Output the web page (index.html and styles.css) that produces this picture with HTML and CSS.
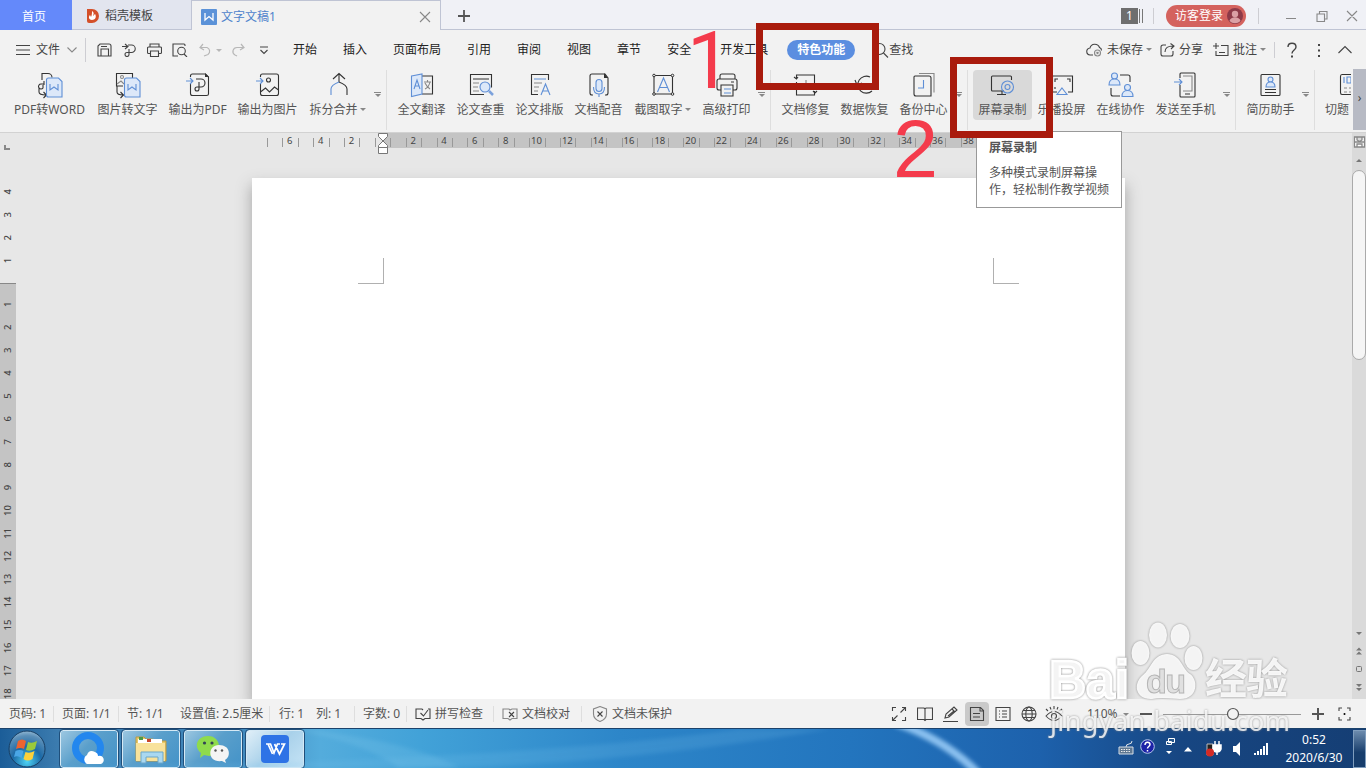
FILE: index.html
```
<!DOCTYPE html>
<html lang="zh-CN">
<head>
  <meta charset="UTF-8" />
  <meta name="viewport" content="width=device-width, initial-scale=1.0" />
  <title>文字文稿1</title>
  <link rel="stylesheet" href="styles.css">
</head>
<body>
  <header class="tabbar">
    <div class="tab home">首页</div>
    <div class="tab docer">
      <svg width="14" height="16" viewBox="0 0 14 16"><path d="M1 1h5a7 7 0 0 1 0 14H3a2 2 0 0 1-2-2z" fill="#d4502a"/><path d="M6 3c3 2 1 4 1 5l2-2c2 3 0 6-3 6s-4-3-2-5l1 2c1-2 1-4 1-6z" fill="#fff"/></svg>
      <span>稻壳模板</span>
    </div>
    <div class="tab active">
      <svg width="16" height="16" viewBox="0 0 16 16"><rect width="16" height="16" rx="1" fill="#5b92d8"/><path d="M4 4v7l4-3.500 4 3.500V4" fill="none" stroke="#fff" stroke-width="1.300"/></svg>
      <span>文字文稿1</span>
      <svg class="close" width="12" height="12" viewBox="0 0 12 12"><path d="M1 1l10 10M11 1L1 11" class="g"/></svg>
    </div>
    <svg class="plus" width="14" height="14" viewBox="0 0 14 14"><path d="M7 1v12M1 7h12" stroke="#555" stroke-width="1.800"/></svg>
    <div class="window">
      <span class="badge">1</span>
      <span class="bars"></span>
      <span class="vline v1"></span>
      <div class="login">访客登录
        <svg width="16" height="16" viewBox="0 0 16 16"><circle cx="8" cy="8" r="8" fill="#8d3a48"/><circle cx="8" cy="6" r="3.200" fill="#dba0a5"/><path d="M2.500 13c1-5 10-5 11 0a8 8 0 0 1-11 0z" fill="#dba0a5"/></svg>
      </div>
      <span class="vline v2"></span>
      <svg class="winbtns" width="72" height="14" viewBox="0 0 72 14"><g class="g"><path d="M0 9.500h10M31 5h7.500v7.500H31zM33.500 5V2.500h7.500V10h-2.500M61 2l10 10M71 2L61 12"/></g></svg>
    </div>
  </header>

  <nav class="menubar">
    <svg class="burger" width="14" height="12" viewBox="0 0 14 12"><path class="k" d="M0 1.500h14M0 6h14M0 10.500h14"/></svg>
    <span class="file">文件</span>
    <svg class="chev" width="10" height="6" viewBox="0 0 10 6"><path class="g" d="M.500.500L5 5 9.500.500"/></svg>
    <span class="vline v3"></span>
    <div class="quick">
      <svg width="15" height="14" viewBox="0 0 15 14"><path class="k" d="M1 13V3l2-2h9a2 2 0 0 1 2 2v10zM4 13V6h7.500v7M4 3.500h6"/></svg>
      <svg width="15" height="14" viewBox="0 0 15 14"><path class="k" d="M6 2h3.500a3.700 3.700 0 0 1 0 7.500H5a2 2 0 1 0 2 2V6M0 3.500h5.500M3 1l3 2.500L3 6"/></svg>
      <svg width="15" height="14" viewBox="0 0 15 14"><path class="k" d="M3 4V1h9v3M3.500 10.500H1.500a1 1 0 0 1-1-1V5a1 1 0 0 1 1-1h12a1 1 0 0 1 1 1v4.500a1 1 0 0 1-1 1h-2M3.500 8h8v5.500h-8z"/></svg>
      <svg width="16" height="14" viewBox="0 0 16 14"><path class="k" d="M6 13H1V1h11a1 1 0 0 1 1 1v1M12 11l3 3"/><circle class="k" cx="9.500" cy="8" r="3.800"/></svg>
    </div>
    <svg class="undo" width="66" height="14" viewBox="0 0 66 14"><path d="M4 1L1 4.500 5 7M1 4.500h7a4 4 0 0 1 1 7l-4 1.500M42 1l3 3.500L41 7M45 4.500h-7a4 4 0 0 0-2 7.500l2 1" fill="none" stroke="#b7b7b7" stroke-width="1.200"/><path d="M17 6h6l-3 3z" fill="#b7b7b7"/><path class="k" d="M61 4h8M61.500 7l3.500 3.500L68.500 7"/></svg>
    <ul class="menu">
      <li>开始</li>
      <li>插入</li>
      <li>页面布局</li>
      <li>引用</li>
      <li>审阅</li>
      <li>视图</li>
      <li>章节</li>
      <li>安全</li>
      <li class="dev">开发工具</li>
      <li class="current">特色功能</li>
    </ul>
    <div class="find">
      <svg width="16" height="16" viewBox="0 0 16 16"><circle class="k" cx="6.500" cy="7" r="5.500"/><path class="k" d="M10.500 11l4.500 4.500"/></svg>
      <span>查找</span>
    </div>
    <div class="actions">
      <svg width="17" height="14" viewBox="0 0 17 14"><path class="k" d="M7 12H4.500a3.500 3.500 0 0 1-.5-7c1-5 8-5 9.500-.5a3 3 0 0 1 2 3"/><circle class="g" cx="11.500" cy="10" r="3"/><path class="g" d="M10.500 9l2 2m0-2l-2 2"/></svg>
      <span class="save">未保存</span><i class="arrow"></i>
      <svg class="share" width="15" height="14" viewBox="0 0 15 14"><path class="k" d="M6 2H3a2 2 0 0 0-2 2v7a2 2 0 0 0 2 2h8a2 2 0 0 0 2-2V8M5 9c0-4 3-6 8-6M10.500.500L14 3l-3 3"/></svg>
      <span>分享</span>
      <svg class="note" width="16" height="14" viewBox="0 0 16 14"><path class="k" d="M3 0v6M0 3h6M8 2.500h7v10H3V8M6 9.500h6"/></svg>
      <span>批注</span><i class="arrow"></i>
      <span class="vline v4"></span>
      <svg width="64" height="16" viewBox="0 0 64 16"><path d="M1 5c0-5 8-5 8 0 0 3-4 3-4 6.500" fill="none" stroke="#444" stroke-width="1.400"/><path d="M4 13.500h2v2H4zM31 2h2v2h-2zM31 7.500h2v2h-2zM31 13h2v2h-2z" fill="#444"/><path class="k" d="M51.500 11L58 4.500l6.500 6.500"/></svg>
    </div>
  </nav>

  <section class="ribbon">
    <div class="tool pdfword"><svg viewBox="0 0 28 28"><path class="k" d="M6 9V2.500h6a4 4 0 0 1 4 4M8 10v4M8 13H5a2.500 2.500 0 1 0 2 4v-3M3 17v4q0 3 7 3M7.500 21l3 3-3 3"/><path class="bf" d="M10.500 9q0-2 2-2h10l3.500 3.500V26H12.500q-2 0-2-2z"/><path class="b" d="M14 13v6l4-3 4 3v-6"/></svg><span>PDF转WORD</span></div>
    <div class="tool w5"><svg viewBox="0 0 28 28"><path class="k" d="M9 15H2.500v-12.500h16V7M3 15v6q0 3 6 3M6.500 21l3 3-3 3"/><path class="g" d="M3 13l4-3 3 3"/><circle class="g" cx="8" cy="6" r="1.500"/><path class="bf" d="M10.500 9q0-2 2-2h10l3.500 3.500V26H12.500q-2 0-2-2z"/><path class="b" d="M14 13v6l4-3 4 3v-6"/></svg><span>图片转文字</span></div>
    <div class="tool outpdf"><svg viewBox="0 0 28 28"><path class="k" d="M6.500 6V5q0-2 2-2h13l3 3v17q0 1.500-2 1.500H8.500q-2 0-2-2V13M12 8h5a4 4 0 0 1 0 8h-4a2 2 0 1 0 2 2V11"/><path d="M21 2l4 4h-4z" fill="#333"/><path class="b" d="M2 10h7M6 7l3 3-3 3"/></svg><span>输出为PDF</span></div>
    <div class="tool w5"><svg viewBox="0 0 28 28"><path class="k" d="M6.500 6V5q0-2 2-2h14q2 0 2 2v17.500q0 2-2 2h-14q-2 0-2-2V13M6.500 21l5-4 4 4 5-5 4 3"/><circle class="k" cx="14.500" cy="9" r="2"/><path class="b" d="M2 10h7M6 7l3 3-3 3"/></svg><span>输出为图片</span></div>
    <div class="tool wa"><svg viewBox="0 0 28 28"><path class="k" d="M15 3v8M9 8l6-5.500L21 8M15 11q8 3 8 7v6"/><path class="b" d="M15 11q-8 3-8 7v6"/></svg><span>拆分合并<i class="arrow"></i></span></div>
    <i class="more"></i><span class="split"></span>
    <div class="tool"><svg viewBox="0 0 28 28"><path class="k" d="M14 5h10.500v18H14"/><path class="bf" d="M3.500 5L14 3v20L3.500 25.500z"/><path class="b" d="M6 18l3-9 3 9M7 15h4"/><path class="g" d="M16 11h7M19.500 9v2M17 18q4-2 5-7M17 12q2 4 5 6"/></svg><span>全文翻译</span></div>
    <div class="tool"><svg viewBox="0 0 28 28"><path class="k" d="M17 23.500H3.500V3.500h21v13M6 8h16"/><path class="g" d="M6 12h6M6 16h5M6 20h6"/><circle class="bf" cx="18" cy="16" r="5"/><path d="M22 20l4 4" stroke="#7ca2dc" stroke-width="2.500"/></svg><span>论文查重</span></div>
    <div class="tool"><svg viewBox="0 0 28 28"><path class="k" d="M12 23.500H5.500V3.500h17V9"/><path class="b" d="M8 8h12M15 24l4.500-11L24 24M16.500 20h6"/><path class="g" d="M8 12h8M8 16h5M8 20h4"/></svg><span>论文排版</span></div>
    <div class="tool"><svg viewBox="0 0 28 28"><path class="k" d="M8 24H7q-2 0-2-2V5q0-2 2-2h13l3 4v15q0 2-2 2h-1"/><path d="M19 2l4 5h-4z" fill="#333"/><rect class="bf" x="11" y="8.500" width="6" height="12" rx="3"/><path class="b" d="M8.500 16q0 7 5.500 7t5.500-7M14 23v3"/></svg><span>文档配音</span></div>
    <div class="tool wa"><svg viewBox="0 0 28 28"><path class="k" d="M5 4.500h18.500v18.500H5z"/><g class="dot"><circle cx="5" cy="4.500" r="1.300"/><circle cx="23.500" cy="4.500" r="1.300"/><circle cx="5" cy="23" r="1.300"/><circle cx="23.500" cy="23" r="1.300"/></g><path class="b" d="M8.500 21l6-14 6 14M10.500 16.500h8"/></svg><span>截图取字<i class="arrow"></i></span></div>
    <div class="tool"><svg viewBox="0 0 28 28"><path class="k" d="M7 8V5q0-2 2-2h11q2 0 2 2v3M8 19H6q-2 0-2-2v-7q0-2 2-2h16q2 0 2 2v7q0 2-2 2h-2M18 11h3"/><path class="k" d="M8 14h12v11H8z"/><path class="b" d="M11 18h7M11 22h7"/></svg><span>高级打印</span></div>
    <i class="more"></i><span class="split"></span>
    <div class="tool"><svg viewBox="0 0 28 28"><path class="k" d="M4.500 8V4h18v13M4.500 11v13h18v-4M2 6l2.500 2L6 6M21 20l2 2 2-2"/><path class="g" d="M14 9v8M9 14h9"/></svg><span>文档修复</span></div>
    <div class="tool"><svg viewBox="0 0 28 28"><path class="k" d="M19 6a8.500 8.500 0 1 0 2 14M4 9l2 5 5-2"/></svg><span>数据恢复</span></div>
    <div class="tool"><svg viewBox="0 0 28 28"><path class="g" d="M9 2.500h15v19"/><path class="k" d="M5 5h14q2 0 2 2v18H6q-2 0-2-2V6q0-1 1-1z"/><path class="b" d="M13.500 9v8H8"/></svg><span>备份中心</span></div>
    <i class="more"></i><span class="split"></span>
    <div class="tool hot"><svg viewBox="0 0 28 28"><path class="k" d="M15 20H3.500q-1 0-1-1V6q0-1 1-1h18q1 0 1 1v3M13 20v3M8 23.500h9"/><circle class="b" cx="18.500" cy="16" r="6"/><circle class="b" cx="18.500" cy="16" r="2.500"/></svg><span>屏幕录制</span></div>
    <div class="tool"><svg viewBox="0 0 28 28"><path class="k" d="M9 21H4.500V5h20v16H20M7 11V8h3M19 8h3v3M7 16v2"/><path class="b" d="M14 17l5 6.500H9z"/></svg><span>乐播投屏</span></div>
    <div class="tool"><svg viewBox="0 0 28 28"><path class="k" d="M13 4h8q2 0 2 2v5M4 17v6q0 2 2 2h7"/><g class="bf"><circle cx="7.500" cy="5" r="3"/><path d="M2 14q0-6 5.500-6t5.500 6z"/><circle cx="20.500" cy="16.500" r="3"/><path d="M15 25.500q0-6 5.500-6t5.500 6z"/></g></svg><span>在线协作</span></div>
    <div class="tool w5"><svg viewBox="0 0 28 28"><path class="k" d="M8 7V3q0-1 1-1h13q1 0 1 1v22q0 1-1 1H9q-1 0-1-1V14M13 23h5"/><path class="g" d="M11 5h9v15h-9"/><path class="b" d="M2 11h8M7 8l3 3-3 3"/></svg><span>发送至手机</span></div>
    <i class="more"></i><span class="split"></span>
    <div class="tool"><svg viewBox="0 0 28 28"><path class="k" d="M5 3.500h17q1 0 1 1v19q0 1-1 1H5q-1 0-1-1v-19q0-1 1-1zM8 18.500h11M8 21.500h11"/><circle class="bf" cx="13.500" cy="8.500" r="2.500"/><path class="bf" d="M9 16q0-5 4.500-5t4.500 5z"/></svg><span>简历助手</span></div>
    <i class="more"></i><span class="split"></span>
    <div class="tool cut"><svg viewBox="0 0 28 28"><path class="k" d="M26 3.500H7q-1.500 0-1.500 2v16q0 2 1.500 2h19"/><path class="b" d="M9 6v6M12 6h4v6h-4z"/><path class="g" d="M9 17h3M14 17h3M9 21h3M14 21h3"/></svg><span>切题</span></div>
    <div class="scroller">›</div>
  </section>

  <main class="workspace">
    <svg class="vruler" id="vruler" width="16" height="566"></svg>
    <div class="canvas">
      <svg class="hruler" id="hruler" width="960" height="22"></svg>
      <div class="page">
        <span class="corner left"></span>
        <span class="corner right"></span>
      </div>
    </div>
    <div class="scrollbar">
      <svg class="rulerbtn" width="14" height="14" viewBox="0 0 14 14"><path d="M2.500 2h10v10h-10zM2 7h11M5 12V9h5v3M5 2v3l2.500 1.500L10 5V2" fill="#fff" stroke="#888" stroke-width="1.300"/></svg>
      <svg width="14" height="8" viewBox="0 0 14 8"><path d="M4 6h6L7 3z" fill="#777"/></svg>
      <div class="thumb"></div>
      <svg class="foot" width="14" height="66" viewBox="0 0 14 66"><path d="M4 2h6L7 5zM4 20.500h6l-3-3zM4 24.500h6l-3-3zM4 54h6l-3 3zM4 58h6l-3 3z" fill="#777"/><rect x="4.500" y="36.500" width="5" height="5" rx="1" fill="none" stroke="#777"/></svg>
    </div>
  </main>

  <footer class="status">
    <span class="s1">页码: 1</span>
    <span class="s2">页面: 1/1</span>
    <span class="s3">节: 1/1</span>
    <span class="s4">设置值: 2.5厘米</span>
    <span class="s5">行: 1</span>
    <span class="s6">列: 1</span>
    <span class="s7">字数: 0</span>
    <span class="s8"><svg width="16" height="14" viewBox="0 0 16 14"><path class="k" d="M7 2H1v9.500h5l2 1.500 2-1.500h5V2h-2M7 2l1 1M5.500 6l3 3L13 3"/></svg>拼写检查</span>
    <span class="s9"><svg width="16" height="14" viewBox="0 0 16 14"><path class="g" d="M7 2H1v9.500h5l2 1.500 2-1.500h5V2h-5L8 3z"/><path class="k" d="M7 5l5 5m0-5l-5 5"/></svg>文档校对</span>
    <span class="s10"><svg width="16" height="16" viewBox="0 0 16 16"><path class="g" d="M8 .500l6.500 2.500v5q0 5-6.500 7.500Q1.500 13 1.500 8V3z"/><path class="k" d="M5.500 5.500l5 5m0-5l-5 5"/></svg>文档未保护</span>
    <div class="views">
      <svg width="16" height="16" viewBox="0 0 16 16"><path class="k" d="M1.500 5V1.500H5M11 1.500h3.500V5M1.500 11v3.500H5M11 14.500h3.500V11M9.500 6.500l5-5M6.500 9.500l-5 5"/></svg>
      <svg width="16" height="16" viewBox="0 0 16 16"><path class="k" d="M8 3v11M8 3L7 2H.500v11.500H7l1 1 1-1h6.500V2H9z"/></svg>
      <svg width="16" height="16" viewBox="0 0 16 16"><path class="k" d="M2 12l1-4 8-7 3 3-8 7zM0 15.500h15M9 3l3 3M5 10l6-5"/></svg>
      <svg class="on" width="24" height="24" viewBox="0 0 24 24"><rect width="24" height="24" rx="4" fill="#c9c9c9"/><path class="k" d="M5.500 5.500h10l3 3v10h-13zM15 5.500v3.500h3.500M8 11.500h7M8 15h7"/></svg>
      <svg width="16" height="16" viewBox="0 0 16 16"><path class="k" d="M1 1.500h14v13H1zM4 5h1M7 5h5M4 8h1M7 8h5M4 11h1M7 11h5"/></svg>
      <svg width="16" height="16" viewBox="0 0 16 16"><circle class="k" cx="8" cy="8" r="7"/><ellipse class="k" cx="8" cy="8" rx="3.200" ry="7"/><path class="k" d="M1 8h14M2 4.500h12M2 11.500h12"/></svg>
      <svg class="eye" width="18" height="16" viewBox="0 0 18 16"><path class="k" d="M1 10q8-9 16 0-8 9-16 0zM3 5L1 3M6 3.500L5 1M9 3V0M12 3.500L13 1M15 5l2-2"/><circle class="k" cx="9" cy="10" r="2.500"/></svg>
    </div>
    <span class="pct">110%</span><i class="arrow"></i>
    <svg class="zoom" width="212" height="16" viewBox="0 0 212 16"><path d="M1 8h12M173 8h12M179 2v12" stroke="#555" stroke-width="2"/><path d="M24 8.500h138" stroke="#999"/><circle cx="94" cy="8" r="5.500" fill="#f2f2f2" stroke="#555" stroke-width="1.200"/><path class="k" d="M200 5V2h3M208 2h3v3M200 11v3h3M208 14h3v-3"/><circle cx="205.500" cy="8" r="1"/></svg>
  </footer>

  <div class="taskbar">
    <svg class="backdrop" width="1366" height="39" viewBox="0 0 1366 39">
      <defs><filter id="soft"><feGaussianBlur stdDeviation="2"/></filter></defs>
      <path d="M0 39Q500 34 740 0h90Q600 39 400 39z" fill="#7cc4ec" opacity=".18" filter="url(#soft)"/>
      <path d="M300 0q110 12 160 39h-60Q360 12 290 0z" fill="#9fdcf5" opacity=".15" filter="url(#soft)"/>
      <path d="M896-6q48 16 82 50" fill="none" stroke="#9fd0fa" stroke-width="8" opacity=".85" filter="url(#soft)"/>
    </svg>
    <svg class="orb" width="40" height="38" viewBox="0 0 40 38">
      <defs><radialGradient id="orb" cx=".5" cy=".85" r=".9"><stop offset="0" stop-color="#4cd3f5"/><stop offset=".45" stop-color="#1c69a6"/><stop offset=".8" stop-color="#5b8fb8"/><stop offset="1" stop-color="#a5c6dd"/></radialGradient></defs>
      <circle cx="20" cy="19" r="18" fill="url(#orb)" stroke="#173e63"/>
      <path d="M11 11q4-3 8 0l-2 8q-4-2-8 0z" fill="#ec6430"/><path d="M21 12q4 2 9-1l-2 8q-5 3-9 1z" fill="#9aca3c"/><path d="M8.500 21q4-2 8 0l-2 7q-4-3-7.500-1z" fill="#4aa6e6"/><path d="M18.500 22q4 2 9-1l-2 8q-5 3-9 0z" fill="#fdd13a"/>
    </svg>
    <div class="task"><svg width="34" height="34" viewBox="0 0 34 34"><circle cx="16" cy="16" r="12.500" fill="none" stroke="#2387ee" stroke-width="7"/><path d="M15 32a5 5 0 0 1 0-9q2-6 8-3 3 1 3 4a4 4 0 0 1 3 8z" fill="#fff"/></svg></div>
    <div class="task"><svg width="34" height="34" viewBox="0 0 34 34"><path d="M2 5h8l2 2h7l2 2h11v20H2z" fill="#e9c968" stroke="#b99a45"/><path d="M4 7h24v5H4z" fill="#fff"/><path d="M5 5h4v3H5z" fill="#4c9a46"/><path d="M13 7h4v3h-4z" fill="#c8452c"/><path d="M2 11h29v18H2z" fill="#f8e29b"/><path d="M7 31V20h22v11h-5v-6H12v6z" fill="#a9d8f1" stroke="#6aa7cb"/></svg></div>
    <div class="task"><svg width="36" height="34" viewBox="0 0 36 34"><path d="M13 4c14 0 15 19 1 20l-5-1-4 3 1-5C-2 15 2 4 13 4z" fill="#8fdb4c"/><circle cx="9.500" cy="11" r="1.600" fill="#345"/><circle cx="17" cy="11" r="1.600" fill="#345"/><path d="M24 13c12 0 12 12 6 15l1 3-4-2c-15 2-15-16-3-16z" fill="#f4f4f4"/><circle cx="20.500" cy="18.500" r="1.200" fill="#555"/><circle cx="27" cy="18.500" r="1.200" fill="#555"/></svg></div>
    <div class="task open"><svg width="30" height="30" viewBox="0 0 30 30"><rect x="1" y="1" width="28" height="28" rx="4" fill="#2e73e6"/><path d="M6 10h4.500l3.500 9 3.500-9H20M8 10l4.500 10M14.500 10l5 10L24.500 10H21" fill="none" stroke="#fff" stroke-width="1.700"/></svg></div>
    <div class="tray">
      <svg width="150" height="22" viewBox="0 0 150 22"><path d="M1 9h14v7H1zM8 9q0-3 3-3t3-3" fill="#5f7892" stroke="#d5dde6"/><path d="M3 11.500h10M3 13.500h10" stroke="#eee" stroke-dasharray="1.500 1"/><circle cx="29.500" cy="8.500" r="6.800" fill="#1c22a8" stroke="#b5c5ea"/><path d="M27 7c0-4 5-3 5-.5 0 2-2.500 2-2.500 4M29.500 12v1.500" fill="none" stroke="#fff" stroke-width="1.500"/><path d="M50.500.500h6v4h-6zM48.500 3.500h5v3h-5z" fill="#27578b" stroke="#fff"/><path d="M48 13h6l-3 3zM66 13.500h8L70 9z" fill="#fff"/><path d="M89 6h6v11h-6z" fill="#222" stroke="#bbb"/><path d="M95 7h8v4q-1 3-4 3t-4-3zM97 3v4M101 3v4M99 13v4" fill="#fff" stroke="#fff" stroke-width="1.500"/><circle cx="92" cy="14.500" r="4" fill="#d52a24"/><path d="M115 8h3l4-4v14l-4-4h-3z" fill="#fff"/><path d="M137 15v2M140 13v4M143 11v6M146 8v9M149 5v12" stroke="#fff" stroke-width="2"/></svg>
      <div class="clock"><span>0:52</span><span>2020/6/30</span></div>
      <div class="peek"></div>
    </div>
  </div>

  <div class="tooltip">
    <b>屏幕录制</b>
    <p>多种模式录制屏幕操<br>作，轻松制作教学视频</p>
  </div>

  <!-- red step marks -->
  <div class="mark box1"></div>
  <div class="mark box2"></div>
  <div class="step one">1</div>
  <div class="step two">2</div>

  <svg class="watermark" width="260" height="130" viewBox="0 0 260 130">
    <g class="wm">
      <text x="9" y="86" class="bai" textLength="80" lengthAdjust="spacingAndGlyphs">Bai</text>
      <ellipse cx="100.500" cy="41" rx="9" ry="12"/>
      <ellipse cx="118" cy="23" rx="9" ry="12.500"/>
      <ellipse cx="140" cy="24" rx="9.500" ry="12"/>
      <ellipse cx="153.500" cy="46" rx="9" ry="12"/>
      <path d="M127 42c14 0 15 15 23 20s9 25-10 25c-6 0-18-2-28 0-16 1-20-15-9-24 8-6 10-21 24-21z"/>
      <text x="165" y="82" class="jy" textLength="83">经验</text>
      <text x="10" y="119" class="url" textLength="240">jingyan.baidu.com</text>
    </g>
    <text x="106" y="81" class="du" textLength="40">du</text>
  </svg>

  <script>
    const ns = "http://www.w3.org/2000/svg";

    function add(svg, name, attrs, text) {
      const el = document.createElementNS(ns, name);
      for (const key in attrs) el.setAttribute(key, attrs[key]);
      if (text !== undefined) el.textContent = text;
      svg.appendChild(el);
    }

    // horizontal ruler, zero sits at x = 132 of the strip
    const h = document.getElementById("hruler");
    add(h, "rect", { x: 132, y: 0, width: 610, height: 15, fill: "#c4c4c4" });
    for (let i = -8; i < 39; i++) {
      add(h, "rect", { x: Math.round(139.3 + i * 15.42), y: 5, width: 1, height: 9, fill: "#999" });
    }
    for (let n = -6; n <= 38; n += 2) {
      if (n === 0) continue;
      add(h, "text", { x: 131.3 + n * 15.42, y: 10.5 }, Math.abs(n));
    }
    add(h, "path", { d: "M127.500.5h9v3l-4.500 4.500-4.500-4.500zM132 8l4.500 4.500v2h-9v-2zM127.500 14.500h9v6h-9z", fill: "#fff", stroke: "#777" });

    // vertical ruler
    const v = document.getElementById("vruler");
    add(v, "rect", { x: 0, y: 150, width: 16, height: 416, fill: "#c4c4c4" });
    add(v, "rect", { x: 0, y: 150, width: 16, height: 1, fill: "#888" });
    add(v, "path", { d: "M5 12v4h5", fill: "none", stroke: "#888", "stroke-width": 2 });
    for (let n = -4; n <= 18; n++) {
      if (n === 0) continue;
      const y = 150.5 + n * 22.9 - (n > 0 ? 2 : 0);
      add(v, "text", { transform: "translate(11 " + y + ") rotate(-90)" }, Math.abs(n));
    }
  </script>
</body>
</html>
```
FILE: styles.css
```
* {
  box-sizing: border-box;
}
body {
  margin: 0;
  width: 1366px;
  height: 768px;
  overflow: hidden;
  position: relative;
  display: flex;
  flex-direction: column;
  font-family: "Noto Sans", "Noto Sans CJK SC", sans-serif;
  font-size: 12px;
  line-height: 16px;
  color: #444;
  background: #e7e7e7;
  white-space: nowrap;
}
svg {
  display: block;
  flex: none;
}
.k, .g, .b, .bf {
  fill: none;
  stroke: #444;
  stroke-width: 1.1;
}
.g {
  stroke: #888;
}
.b {
  stroke: #5f8fd6;
}
.bf {
  stroke: #5f8fd6;
  fill: #dce8f9;
}
.dot {
  fill: #f2f2f2;
  stroke: #333;
}
.vline {
  width: 1px;
  height: 16px;
  background: #cdcdd2;
}
.arrow {
  display: inline-block;
  border: 3px solid transparent;
  border-top-color: #888;
  border-bottom: 0;
}

/* document tabs */
.tabbar {
  height: 30px;
  flex: none;
  display: flex;
  align-items: center;
  background: #f0f1f6;
  border-bottom: 1px solid #bfc4d4;
}
.tab {
  height: 30px;
  display: flex;
  align-items: center;
  padding-top: 4px;
}
.home {
  width: 72px;
  justify-content: center;
  padding-right: 4px;
  color: #fff;
  background: #6489fa;
}
.docer {
  width: 119px;
  padding-left: 14px;
  gap: 5px;
  background: #e2e5ef;
  border-bottom: 1px solid #bfc4d4;
}
.active {
  width: 250px;
  padding-left: 9px;
  gap: 4px;
  color: #4f83cc;
  background: #f2f2f2;
  border: 1px solid #bfc4d4;
  border-bottom: 0;
}
.close {
  margin-left: auto;
  margin-right: 9px;
}
.plus {
  margin-left: 16px;
  margin-top: 2px;
}
.window {
  margin-left: auto;
  display: flex;
  align-items: center;
  padding: 2px 8px 0 0;
}
.badge {
  width: 17px;
  height: 16px;
  text-align: center;
  color: #fff;
  background: #6e6e6e;
}
.bars {
  width: 4px;
  height: 14px;
  margin-left: 1px;
  border: solid #777;
  border-width: 0 1px;
}
.v1 {
  margin: 0 12px 0 10px;
}
.login {
  width: 80px;
  height: 22px;
  padding-left: 9px;
  border-radius: 11px;
  display: flex;
  align-items: center;
  gap: 4px;
  color: #fff;
  background: #d4625e;
}
.v2 {
  margin: 0 27px 0 12px;
}

/* menu row */
.menubar {
  height: 38px;
  flex: none;
  display: flex;
  align-items: center;
  padding: 1px 0 0 16px;
  background: #f2f2f2;
}
.file {
  margin-left: 6px;
}
.chev {
  margin-left: 7px;
}
.v3 {
  height: 24px;
  margin: 0 11px 0 8px;
}
.quick {
  display: flex;
  gap: 10px;
}
.undo {
  margin-left: 11px;
  overflow: visible;
}
.menu {
  margin: 0 0 0 28px;
  padding: 0;
  list-style: none;
  display: flex;
  align-items: center;
  gap: 26px;
  color: #222;
}
.dev {
  margin-left: 3px;
}
.current {
  width: 68px;
  height: 20px;
  margin-left: -7px;
  border-radius: 10px;
  text-align: center;
  line-height: 20px;
  font-weight: bold;
  color: #fff;
  background: #5b8ee0;
}
.find {
  margin-left: 18px;
  display: flex;
  align-items: center;
}
.actions {
  margin-left: auto;
  padding-right: 15px;
  display: flex;
  align-items: center;
}
.actions span {
  margin-left: 4px;
}
.actions .arrow {
  margin-left: 3px;
}
.share {
  margin-left: 8px;
}
.note {
  margin-left: 10px;
}
.actions .v4 {
  margin: 0 12px 0 8px;
}
.actions svg {
  overflow: visible;
}

/* ribbon */
.ribbon {
  height: 65px;
  flex: none;
  display: flex;
  padding-left: 7px;
  overflow: hidden;
  background: #f2f2f2;
  border-bottom: 1px solid #d2d2d2;
}
.tool {
  width: 59px;
  height: 50px;
  margin-top: 2px;
  flex: none;
  display: flex;
  flex-direction: column;
  align-items: center;
  color: #555;
}
.tool svg {
  width: 28px;
  height: 28px;
  margin: 1px 0 3px;
}
.tool .k {
  stroke: #333;
}
.pdfword {
  width: 85px;
}
.w5 {
  width: 71px;
}
.outpdf {
  width: 69px;
}
.wa {
  width: 69px;
}
.wa .arrow {
  margin-left: 2px;
  vertical-align: 3px;
}
.hot {
  border-radius: 4px;
  background: #d9d9d9;
}
.more {
  width: 7px;
  height: 7px;
  margin: 24px 1px 0 2px;
  flex: none;
  border-top: 1px solid #888;
}
.more::after {
  content: "";
  display: block;
  margin: 1px 0 0 1px;
  width: 0;
  border: 3px solid transparent;
  border-top-color: #888;
  border-bottom: 0;
}
.split {
  width: 1px;
  height: 60px;
  margin: 2px 5px 0 4px;
  flex: none;
  background: #dedede;
}
.cut {
  width: 31px;
  overflow: hidden;
  align-items: flex-start;
}
.cut span {
  margin-left: 5px;
}
.cut svg {
  margin-left: 15px;
}
.scroller {
  width: 13px;
  height: 61px;
  margin: 1px 0 0 auto;
  flex: none;
  text-align: center;
  line-height: 58px;
  background: #b7bac4;
}

/* document area */
.workspace {
  flex: 1;
  min-height: 0;
  display: flex;
}
.canvas {
  flex: 1;
  overflow: hidden;
  display: flex;
  flex-direction: column;
}
.vruler text, .hruler text {
  font-size: 9.5px;
  text-anchor: middle;
  fill: #444;
}
.vruler text {
  font-weight: 500;
}
.hruler {
  margin-left: 235px;
}
.page {
  width: 873px;
  flex: 1;
  margin: 23px 0 0 236px;
  padding: 80px 106px 0;
  display: flex;
  justify-content: space-between;
  background: #fff;
  box-shadow: 0 8px 14px 1px #aaa;
}
.corner {
  width: 26px;
  height: 26px;
  border-bottom: 1px solid #b0b0b0;
}
.corner.left {
  border-right: 1px solid #b0b0b0;
}
.corner.right {
  border-left: 1px solid #b0b0b0;
}
.scrollbar {
  width: 14px;
  display: flex;
  flex-direction: column;
  background: #dadada;
}
.rulerbtn {
  margin: 2px 0 7px;
}
.thumb {
  height: 190px;
  margin-top: 6px;
  border: 1px solid #aaa;
  border-radius: 7px;
  background: #f5f5f5;
}
.foot {
  margin-top: auto;
  margin-bottom: 3px;
}

/* status bar */
.status {
  height: 29px;
  flex: none;
  display: flex;
  align-items: center;
  padding: 1px 0 0 9px;
  color: #555;
  background: #f2f2f2;
}
.status > span {
  flex: none;
  display: flex;
  align-items: center;
  gap: 4px;
}
.s1, .s2, .s4, .s6, .s7, .s8, .s9 {
  border-right: 1px solid #dedede;
}
.s1 { width: 45px; }
.s2 { width: 65px; padding-left: 8px; }
.s3 { width: 61px; padding-left: 8px; }
.s4 { width: 90px; }
.s5 { width: 46px; padding-left: 9px; }
.s6 { width: 39px; }
.s7 { width: 52px; padding-left: 8px; }
.s8 { width: 87px; padding-left: 8px; }
.s9 { width: 88px; padding-left: 8px; }
.s10 { padding-left: 10px; }
.views {
  margin-left: auto;
  display: flex;
  align-items: center;
  gap: 10px;
}
.views .on {
  margin: 0 -4px;
}
.eye {
  margin-left: -2px;
}
.status .pct {
  width: 36px;
  margin-left: 24px;
}
.zoom {
  margin: 0 15px 0 10px;
}

/* windows taskbar */
.taskbar {
  height: 40px;
  flex: none;
  position: relative;
  display: flex;
  align-items: center;
  border-top: 1px solid #1c426b;
  background: linear-gradient(90deg, #1b5d98, #3d7db0 60px, #3f88bd 240px, #54acdc 320px, #42a2d8 420px, #2d86c9 620px, #2375be 850px, #1d61ac 1040px, #174682 1180px, #153e74);
}
.backdrop {
  position: absolute;
  left: 0;
  top: 0;
}
.orb {
  margin: 0 13px 0 7px;
}
.task {
  width: 58px;
  height: 38px;
  margin-right: 4px;
  display: flex;
  align-items: center;
  justify-content: center;
  border: 1px solid #d5e9f5;
  border-radius: 3px;
  outline: 1px solid #1f4f7b;
  background: linear-gradient(135deg, #9cc7e1, #5a9fcb 45%, #4493c8);
}
.task svg, .orb, .tray {
  position: relative;
}
.open {
  background: linear-gradient(135deg, #e0eff8, #a9d1ea 50%, #c5e3f5);
}
.tray {
  margin-left: auto;
  display: flex;
  align-items: center;
  color: #fff;
}
.clock {
  width: 72px;
  margin: 0 3px 0 10px;
  display: flex;
  flex-direction: column;
  align-items: center;
  line-height: 18px;
}
.peek {
  width: 13px;
  height: 38px;
  border: 1px solid #7f9dbd;
  background: linear-gradient(#6c8bad, #173d6c 60%);
}

/* things floating over the window */
.tooltip {
  position: absolute;
  left: 976px;
  top: 131px;
  width: 146px;
  height: 77px;
  padding: 8px 12px;
  color: #555;
  background: #fff;
  border: 1px solid #999;
}
.tooltip p {
  margin: 8px 0 0;
  line-height: 17px;
}
.mark {
  position: absolute;
  border: 7px solid #a91b0d;
}
.box1 {
  left: 756px;
  top: 23px;
  width: 123px;
  height: 67px;
}
.box2 {
  left: 950px;
  top: 57px;
  width: 103px;
  height: 81px;
}
.step {
  position: absolute;
  font-family: "Liberation Sans", sans-serif;
  font-size: 81px;
  line-height: 80px;
  color: #f43b4c;
}
.one {
  left: 687px;
  top: 21px;
  font-family: Roboto, sans-serif;
  font-size: 79px;
}
.two {
  left: 893px;
  top: 109px;
}
.watermark {
  position: absolute;
  left: 1040px;
  top: 612px;
  filter: drop-shadow(0 0 1px #888);
}
.wm {
  fill: #fff;
  fill-opacity: .9;
}
.bai, .du {
  font-family: "Liberation Sans", sans-serif;
  font-weight: bold;
  font-size: 54px;
}
.bai {
  stroke: #fff;
  stroke-width: 2.5;
}
.du {
  font-size: 34px;
  fill: #e0e0e0;
  stroke: #b5b5b5;
  stroke-width: 1;
}
.jy {
  font-family: "Noto Sans CJK SC", sans-serif;
  font-weight: bold;
  font-size: 42px;
}
.url {
  font-family: "Noto Sans", sans-serif;
  font-size: 27px;
  fill-opacity: .8;
}
```
